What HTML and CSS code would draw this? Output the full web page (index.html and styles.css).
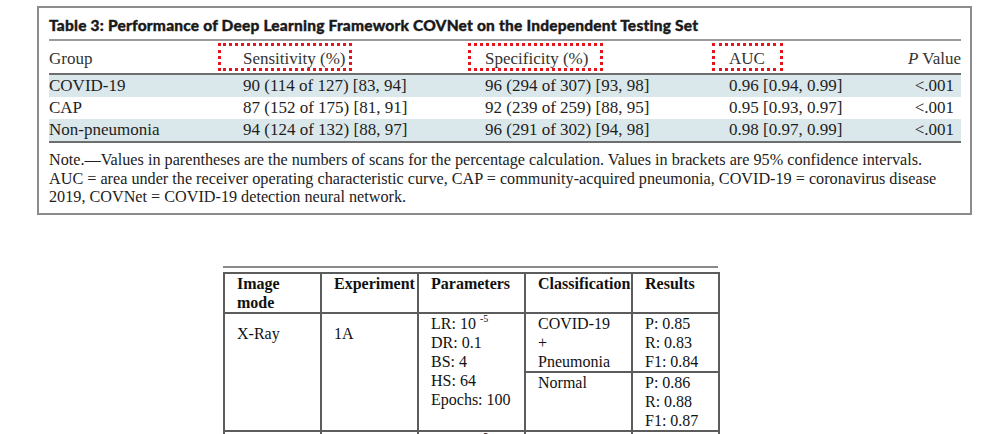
FILE: index.html
```html
<!DOCTYPE html>
<html lang="en">
<head>
<meta charset="utf-8">
<title>COVNet tables</title>
<link rel="stylesheet" href="styles.css">
</head>
<body>
<section class="figure">
  <h1 class="fig-title">Table 3: Performance of Deep Learning Framework COVNet on the Independent Testing Set</h1>
  <div class="perf">
    <div class="prow head">
      <div class="c1 plain">Group</div>
      <div class="c2"><span class="mark m-sens">Sensitivity (%)</span></div>
      <div class="c3"><span class="mark m-spec">Specificity (%)</span></div>
      <div class="c4"><span class="mark m-auc">AUC</span></div>
      <div class="c5 plain"><i>P</i> Value</div>
    </div>
    <div class="prow band">
      <div class="c1">COVID-19</div>
      <div class="c2">90 (114 of 127) [83, 94]</div>
      <div class="c3">96 (294 of 307) [93, 98]</div>
      <div class="c4">0.96 [0.94, 0.99]</div>
      <div class="c5 pv">&lt;.001</div>
    </div>
    <div class="prow">
      <div class="c1">CAP</div>
      <div class="c2">87 (152 of 175) [81, 91]</div>
      <div class="c3">92 (239 of 259) [88, 95]</div>
      <div class="c4">0.95 [0.93, 0.97]</div>
      <div class="c5 pv">&lt;.001</div>
    </div>
    <div class="prow band last">
      <div class="c1">Non-pneumonia</div>
      <div class="c2">94 (124 of 132) [88, 97]</div>
      <div class="c3">96 (291 of 302) [94, 98]</div>
      <div class="c4">0.98 [0.97, 0.99]</div>
      <div class="c5 pv">&lt;.001</div>
    </div>
  </div>
  <p class="note">Note.—Values in parentheses are the numbers of scans for the percentage calculation. Values in brackets are 95% confidence intervals.<br>AUC = area under the receiver operating characteristic curve, CAP = community-acquired pneumonia, COVID-19 = coronavirus disease<br>2019, COVNet = COVID-19 detection neural network.</p>
</section>

<section class="exp-wrap">
  <table class="exp">
    <colgroup>
      <col class="w1"><col class="w2"><col class="w3"><col class="w4"><col class="w5">
    </colgroup>
    <thead>
      <tr>
        <th>Image<br>mode</th>
        <th>Experiment</th>
        <th>Parameters</th>
        <th>Classification</th>
        <th>Results</th>
      </tr>
    </thead>
    <tbody>
      <tr>
        <td rowspan="2" class="lead">X-Ray</td>
        <td rowspan="2" class="lead">1A</td>
        <td rowspan="2" class="params">LR: 10 <sup>-5</sup><br>DR: 0.1<br>BS: 4<br>HS: 64<br>Epochs: 100</td>
        <td>COVID-19<br>+<br>Pneumonia</td>
        <td>P: 0.85<br>R: 0.83<br>F1: 0.84</td>
      </tr>
      <tr>
        <td>Normal</td>
        <td>P: 0.86<br>R: 0.88<br>F1: 0.87</td>
      </tr>
      <tr>
        <td class="lead"></td>
        <td class="lead"></td>
        <td class="params">LR: 10 <sup>-5</sup><br>DR: 0.1</td>
        <td>COVID-19</td>
        <td>P: 0.82</td>
      </tr>
    </tbody>
  </table>
</section>
</body>
</html>
```

FILE: styles.css
```css
html, body {
  margin: 0;
  padding: 0;
  background: #ffffff;
  overflow: hidden;
  height: 434px;
}

body {
  font-family: "Liberation Serif", "Times New Roman", serif;
  color: #1e1e1e;
}

/* ---------- Figure 1: performance table ---------- */
.figure {
  margin: 6px 0 0 37px;
  width: 935px;
  height: 209px;
  box-sizing: border-box;
  border: 2px solid #8c8c8c;
  padding: 0 9px 0 10px;
}

.fig-title {
  margin: 0;
  padding: 6px 0 3px;
  height: 22px;
  font-family: Lato, "Open Sans", sans-serif;
  font-weight: 900;
  font-size: 15.5px;
  line-height: 22px;
  color: #1a1a1a;
  letter-spacing: 0.2px;
  -webkit-text-stroke: 0.35px #1a1a1a;
  border-bottom: 2px solid #9a9a9a;
  white-space: nowrap;
}

.perf {
  font-size: 17px;
}

.prow {
  display: grid;
  grid-template-columns: 194px 242px 244px 150px 82px;
  height: 22px;
  line-height: 22px;
}

.prow.head {
  height: 28px;
  line-height: 28px;
  padding: 2px 0;
  border-bottom: 2px solid #6e6e6e;
  color: #333;
}

.prow.head .plain {
  padding-top: 3px;
  line-height: 26px;
}

.prow.band {
  background: #dbe8eb;
}

.prow.last {
  border-bottom: 2px solid #6e6e6e;
}

.c5 {
  text-align: right;
  white-space: nowrap;
}

.pv {
  padding-right: 7px;
}

.mark {
  display: inline-block;
  vertical-align: top;
  box-sizing: border-box;
  height: 28px;
  padding-top: 2px;
  line-height: 22px;
  border: 3px dotted #e3151d;
  white-space: nowrap;
}

.m-sens {
  width: 134px;
  margin-left: -25px;
  padding-left: 22px;
}

.m-spec {
  width: 135px;
  margin-left: -17px;
  padding-left: 14px;
}

.m-auc {
  width: 71px;
  margin-left: -17px;
  padding-left: 14px;
}

.note {
  margin: 0;
  padding-top: 8px;
  font-size: 16.2px;
  line-height: 18.5px;
  color: #222;
  white-space: nowrap;
}

/* ---------- Figure 2: experiment table ---------- */
.exp-wrap {
  margin: 51px 0 0 223px;
  width: 495px;
  border-top: 2px solid #8a8a8a;
  padding-top: 4px;
}

.exp {
  border-collapse: collapse;
  table-layout: fixed;
  width: 495px;
  font-size: 16px;
  line-height: 19px;
  color: #111;
}

.w1 { width: 97px; }
.w2 { width: 97px; }
.w3 { width: 107px; }
.w4 { width: 107px; }
.w5 { width: 87px; }

.exp th,
.exp td {
  border: 2px solid #5c5c5c;
  padding: 0 0 0 12px;
  vertical-align: top;
  text-align: left;
  white-space: nowrap;
}

.exp th {
  font-weight: 700;
  padding-top: 0;
  height: 38px;
}

.exp td.lead {
  padding-top: 10px;
}

.exp td.params {
  height: 114px;
}

.exp sup {
  font-size: 10px;
  line-height: 0;
  vertical-align: 7px;
}
```
